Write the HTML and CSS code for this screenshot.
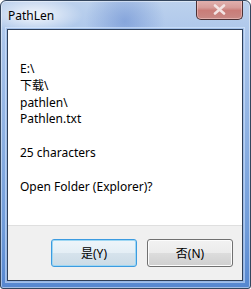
FILE: index.html
```
<!DOCTYPE html>
<html>
<head>
<meta charset="utf-8">
<link rel="stylesheet" href="styles.css">
</head>
<body>
<div class="window">
  <div class="titlebar">
    <span class="title">PathLen</span>
    <div class="close">
      <svg width="13" height="11" viewBox="0 0 13 11"><path d="M2 1.5 L11 9.5 M11 1.5 L2 9.5" stroke="#f3e3e3" stroke-width="2.6" stroke-linecap="round"/></svg>
    </div>
  </div>
  <div class="frame">
    <div class="client">
      <div class="message">
        <div class="line">E:\</div>
        <div class="line">下载\</div>
        <div class="line">pathlen\</div>
        <div class="line">Pathlen.txt</div>
        <div class="line">&nbsp;</div>
        <div class="line">25 characters</div>
        <div class="line">&nbsp;</div>
        <div class="line">Open Folder (Explorer)?</div>
      </div>
      <div class="buttons">
        <button class="btn default">是(Y)</button>
        <button class="btn">否(N)</button>
      </div>
    </div>
  </div>
</div>
</body>
</html>
```
FILE: styles.css
```
html, body {
  margin: 0;
  padding: 0;
  background: #ffffff;
}
body {
  width: 251px;
  height: 289px;
  font-family: "Noto Sans", "Noto Sans CJK SC", sans-serif;
  font-size: 12px;
}
.window {
  box-sizing: border-box;
  width: 251px;
  height: 289px;
  border: 1px solid #34465e;
  border-radius: 6px 6px 3px 3px;
  display: flex;
  flex-direction: column;
  overflow: hidden;
  background:
    radial-gradient(ellipse 48px 18px at 34px 14px, rgba(255,255,255,0.85), rgba(255,255,255,0) 100%),
    radial-gradient(ellipse 40px 40px at 124px 20px, rgba(80,120,200,0.45), rgba(80,120,200,0) 100%),
    linear-gradient(180deg, #bcd1ed 0%, #a9c4ea 15%, #8fb2e3 45%, #6f9bd9 80%, #5687d0 100%);
  box-shadow: inset 0 0 0 1px rgba(255,255,255,0.45);
}
.titlebar {
  height: 28px;
  flex: none;
  display: flex;
  align-items: flex-start;
  padding: 0 7px;
}
.title {
  margin-top: 7px;
  color: #000000;
  font-size: 12px;
  line-height: 15px;
}
.close {
  margin-left: auto;
  margin-top: -1px;
  box-sizing: border-box;
  width: 47px;
  height: 20px;
  border: 1px solid #4a3034;
  border-top: none;
  border-radius: 0 0 5px 5px;
  background: linear-gradient(180deg, #e2b3b1 0%, #d69c99 40%, #c97c78 55%, #c88a86 100%);
  box-shadow: inset 0 0 0 1px rgba(255,220,220,0.45);
  display: flex;
  align-items: center;
  justify-content: center;
}
.close svg {
  display: block;
}
.frame {
  flex: 1;
  display: flex;
  padding: 0 7px 7px 6px;
}
.client {
  flex: 1;
  display: flex;
  flex-direction: column;
  border: 1px solid #2e3f59;
  box-shadow: 0 0 0 1px rgba(140,175,225,0.6), 0 0 0 2px rgba(220,235,255,0.55);
  background: #ffffff;
}
.message {
  height: 195px;
  box-sizing: border-box;
  padding: 31px 0 0 12px;
  color: #000000;
  line-height: 16.8px;
}
.buttons {
  flex: 1;
  background: #f0f0f0;
  border-top: 1px solid #dfdfdf;
  display: flex;
  justify-content: flex-end;
  align-items: flex-start;
  gap: 10px;
  padding: 13px 9px 0 0;
}
.btn {
  box-sizing: border-box;
  width: 86px;
  height: 28px;
  border: 1px solid #707070;
  border-radius: 3px;
  background: linear-gradient(180deg, #f2f2f2 0%, #ebebeb 50%, #dddddd 50%, #cfcfcf 100%);
  box-shadow: inset 0 0 0 1px #fcfcfc;
  font-family: "Noto Sans", "Noto Sans CJK SC", sans-serif;
  font-size: 12px;
  color: #000000;
  padding: 0;
  margin: 0;
}
.btn.default {
  border-color: #3c9be0;
  background: linear-gradient(180deg, #eef5fa 0%, #e4eef5 50%, #d6e3ec 50%, #cbdbe6 100%);
  box-shadow: inset 0 0 0 1px #9ed7f3;
}
```
